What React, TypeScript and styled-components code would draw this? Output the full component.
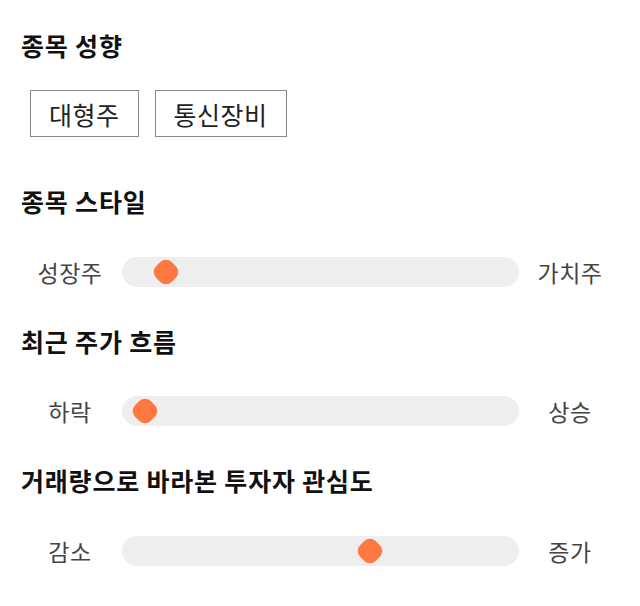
import React from 'react';
import styled, { createGlobalStyle } from 'styled-components';

const GlobalStyle = createGlobalStyle`
  body {
    margin: 0;
    background: #fff;
    font-family: 'Noto Sans CJK KR', 'Noto Sans', sans-serif;
  }
`;

const Page = styled.div`
  width: 640px;
  padding: 30px 21px 0;
  box-sizing: border-box;
`;

const Section = styled.section`
  margin-bottom: 39px;
`;

const Heading = styled.h2`
  margin: 0;
  font-size: 25px;
  line-height: 30px;
  font-weight: 700;
  letter-spacing: 0.8px;
  color: #111;
`;

const TagList = styled.div`
  display: flex;
  gap: 16px;
  margin: 30px 0 0 9px;
  padding-bottom: 10px;
`;

const Tag = styled.span`
  display: inline-flex;
  align-items: center;
  height: 47px;
  padding: 0 18px;
  border: 1px solid #888;
  box-sizing: border-box;
  font-size: 25px;
  letter-spacing: 0.5px;
  color: #222;
`;

const SliderRow = styled.div`
  display: flex;
  align-items: center;
  gap: 11.5px;
  height: 30px;
  margin: 40.5px 9px 0;
`;

const SideLabel = styled.span`
  width: 80px;
  text-align: center;
  font-size: 23px;
  line-height: 30px;
  letter-spacing: 0.5px;
  color: #444;
`;

const Track = styled.div`
  position: relative;
  flex: 1;
  height: 30px;
  border-radius: 15px;
  background: #eeeeee;
`;

const Thumb = styled.div`
  position: absolute;
  top: 50%;
  width: 22px;
  height: 22px;
  margin: -11px 0 0 -11px;
  border-radius: 8px;
  background: #ff7741;
  transform: rotate(45deg);
`;

interface SliderProps {
  left: string;
  right: string;
  value: number;
}

const Slider: React.FC<SliderProps> = ({ left, right, value }) => (
  <SliderRow>
    <SideLabel>{left}</SideLabel>
    <Track>
      <Thumb style={{ left: `${value}%` }} />
    </Track>
    <SideLabel>{right}</SideLabel>
  </SliderRow>
);

const App: React.FC = () => (
  <Page>
    <GlobalStyle />
    <Section>
      <Heading>종목 성향</Heading>
      <TagList>
        <Tag>대형주</Tag>
        <Tag>통신장비</Tag>
      </TagList>
    </Section>
    <Section>
      <Heading>종목 스타일</Heading>
      <Slider left="성장주" right="가치주" value={11.1} />
    </Section>
    <Section>
      <Heading>최근 주가 흐름</Heading>
      <Slider left="하락" right="상승" value={5.8} />
    </Section>
    <Section>
      <Heading>거래량으로 바라본 투자자 관심도</Heading>
      <Slider left="감소" right="증가" value={62.5} />
    </Section>
  </Page>
);

export default App;
